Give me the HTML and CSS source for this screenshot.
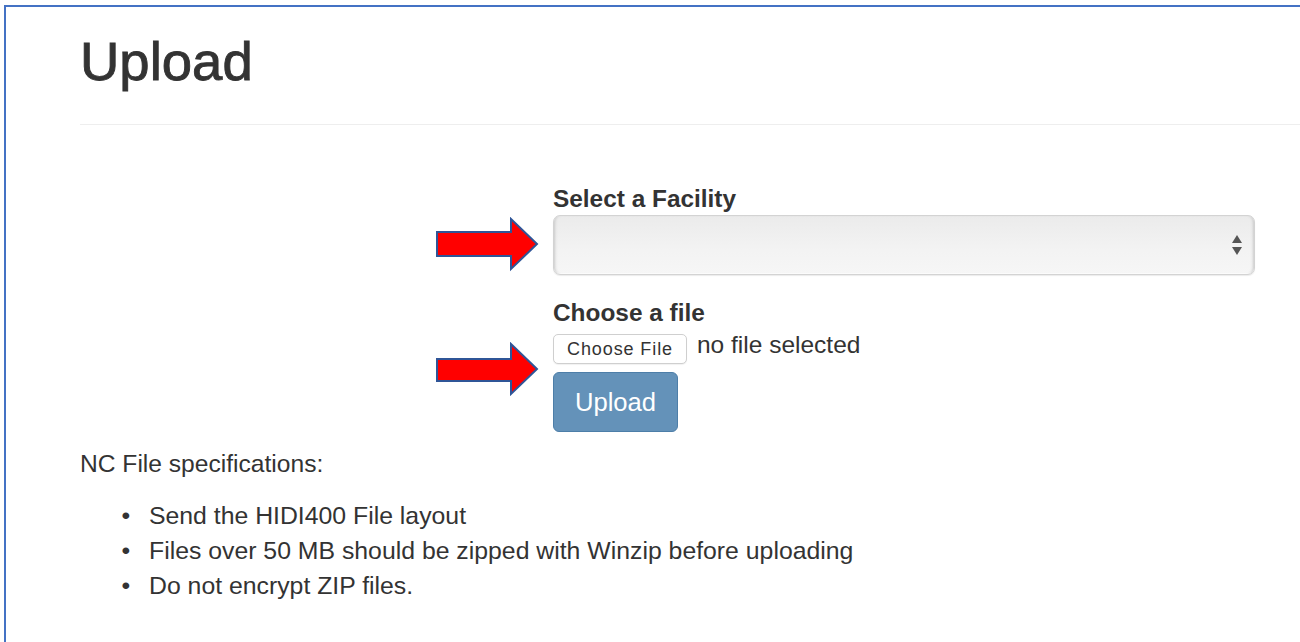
FILE: index.html
```html
<!DOCTYPE html>
<html lang="en">
<head>
<meta charset="utf-8">
<title>Upload</title>
<link rel="stylesheet" href="styles.css">
</head>
<body>
<div class="frame">
  <div class="container">
    <div class="page-header">
      <h1>Upload</h1>
    </div>

    <form class="upload-form">
      <svg class="pointer pointer-facility" width="104" height="56" viewBox="0 0 104 56" aria-hidden="true">
        <polygon points="2,15 76,15 76,2 102,27 76,52 76,39 2,39" fill="#ff0000" stroke="#2f5597" stroke-width="2" stroke-linejoin="miter"/>
      </svg>
      <svg class="pointer pointer-file" width="104" height="56" viewBox="0 0 104 56" aria-hidden="true">
        <polygon points="2,17 76,17 76,2 102,27 76,52 76,39 2,39" fill="#ff0000" stroke="#2f5597" stroke-width="2" stroke-linejoin="miter"/>
      </svg>

      <div class="form-group">
        <label class="control-label" for="facility">Select a Facility</label>
        <div class="select-box" id="facility">
          <svg class="select-arrows" width="12" height="22" viewBox="0 0 12 22" aria-hidden="true">
            <polygon points="6,1 11,9 1,9" fill="#555"/>
            <polygon points="1,13 11,13 6,21" fill="#555"/>
          </svg>
        </div>
      </div>

      <div class="form-group file-group">
        <label class="control-label" for="file">Choose a file</label>
        <div class="file-row">
          <span class="file-button" id="file">Choose File</span>
          <span class="file-name">no file selected</span>
        </div>
      </div>

      <button type="button" class="btn-upload">Upload</button>
    </form>

    <p class="spec-title">NC File specifications:</p>
    <ul class="spec-list">
      <li>Send the HIDI400 File layout</li>
      <li>Files over 50 MB should be zipped with Winzip before uploading</li>
      <li>Do not encrypt ZIP files.</li>
    </ul>
  </div>
</div>
</body>
</html>
```

FILE: styles.css
```css
* {
  box-sizing: border-box;
}

html,
body {
  margin: 0;
  padding: 0;
  background: #ffffff;
  height: 100%;
  overflow: hidden;
}

body {
  font-family: "Liberation Sans", Arial, Helvetica, sans-serif;
  font-size: 24.6px;
  color: #333333;
}

/* window frame: blue top and left edges */
.frame {
  margin: 5px 0 0 4px;
  border-top: 2px solid #4472c4;
  border-left: 2px solid #4472c4;
  height: calc(100% - 5px);
}

.container {
  padding: 26px 0 0 74px;
}

.page-header {
  padding-bottom: 33px;
  border-bottom: 1px solid #eeeeee;
}

.page-header h1 {
  margin: 0;
  font-size: 54.5px;
  line-height: 58px;
  font-weight: 500;
  color: #333333;
  -webkit-text-stroke: 0.9px #333333;
}

.upload-form {
  position: relative;
  margin: 60px 0 0 473px;
  width: 702px;
}

.pointer {
  position: absolute;
  left: -118px;
}

.pointer-facility {
  top: 32px;
}

.pointer-file {
  top: 157px;
}

.form-group {
  display: flex;
  flex-direction: column;
}

.control-label {
  font-weight: bold;
  font-size: 24.4px;
  line-height: 28px;
  margin-bottom: 2px;
  color: #333333;
}

.select-box {
  height: 60px;
  border: 1px solid #d3d3d3;
  border-radius: 7px;
  background: linear-gradient(#ebebeb, #f3f3f3 60%, #f6f6f6);
  box-shadow: inset 3px 0 3px -2px #c8c8c8, inset -3px 0 3px -2px #c8c8c8, inset 0 -1px 0 #ffffff, 0 1px 1px rgba(0, 0, 0, 0.08);
  display: flex;
  align-items: center;
  justify-content: flex-end;
  padding-right: 11px;
}

.file-group {
  margin-top: 24px;
}

.file-group .control-label {
  margin-bottom: 7px;
}

.file-row {
  display: flex;
  align-items: flex-start;
  gap: 10px;
}

.file-button {
  height: 30px;
  padding: 0 13px;
  border: 1px solid #cfcfcf;
  border-radius: 5px;
  background: #ffffff;
  font-size: 18px;
  letter-spacing: 0.9px;
  line-height: 28px;
  color: #333333;
  box-shadow: 0 1px 1px rgba(0, 0, 0, 0.06);
}

.file-name {
  font-size: 24.5px;
  line-height: 22px;
  color: #333333;
}

.btn-upload {
  display: block;
  margin-top: 8px;
  width: 125px;
  height: 60px;
  border: 1px solid #4d7ea8;
  border-radius: 6px;
  background: #6492b9;
  color: #ffffff;
  font-family: "Liberation Sans", Arial, Helvetica, sans-serif;
  font-size: 25.6px;
  padding: 0;
}

.spec-title {
  margin: 15px 0 0 0;
  line-height: 33px;
}

.spec-list {
  margin: 18px 0 0 0;
  padding-left: 69px;
  line-height: 35px;
  font-size: 24.8px;
  list-style-type: "\2022\00a0\00a0\2009";
}
```
